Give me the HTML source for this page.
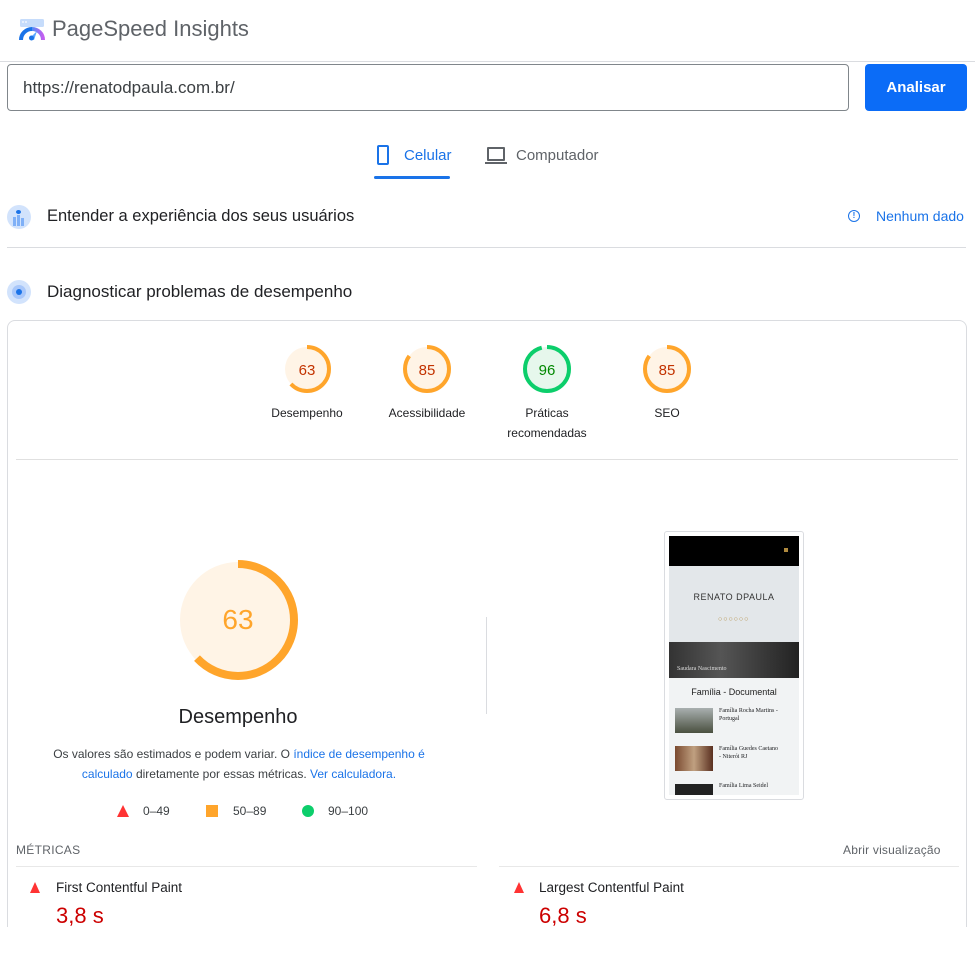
<!DOCTYPE html>
<html style="height:955px;overflow:hidden"><head><meta charset="utf-8"><style>
*{margin:0;padding:0;box-sizing:border-box}
body{width:975px;height:955px;background:#fff;font-family:"Liberation Sans",Arial,sans-serif;position:relative;overflow:hidden;color:#202124}
.a{position:absolute}
.t{white-space:nowrap}
</style></head><body>
<svg class="a" style="left:18px;top:18px" width="28" height="24" viewBox="0 0 28 24">
<rect x="2" y="1" width="24" height="8" rx="1.5" fill="#c6dcfb"/>
<circle cx="5" cy="4" r=".9" fill="#fff"/><circle cx="8" cy="4" r=".9" fill="#fff"/>
<path d="M3 22 A11 11 0 0 1 14 11" stroke="#1a73e8" stroke-width="4" fill="none"/>
<path d="M14 11 A11 11 0 0 1 25 22" stroke="url(#g)" stroke-width="4" fill="none"/>
<defs><linearGradient id="g"><stop offset="0" stop-color="#4e8df5"/><stop offset="1" stop-color="#c45ef0"/></linearGradient></defs>
<path d="M12 20 L19 13 L16 22 Z" fill="#5aa6ff"/>
<circle cx="13.5" cy="20" r="2.5" fill="#1a73e8"/>
</svg>
<div class="a t" style="left:52px;top:16px;font-size:22px;color:#5f6368">PageSpeed Insights</div>
<div class="a" style="left:0;top:61px;width:975px;height:1px;background:#dadce0"></div>
<div class="a" style="left:7px;top:64px;width:842px;height:47px;border:1px solid #80868b;border-radius:4px"></div>
<div class="a t" style="left:23px;top:78px;font-size:17px;color:#3c4043">https://renatodpaula.com.br/</div>
<div class="a" style="left:865px;top:64px;width:102px;height:47px;background:#0b6cf7;border-radius:4px;color:#fff;font-weight:bold;font-size:15px;text-align:center;line-height:48px">Analisar</div>
<div class="a" style="left:377px;top:145px;width:12px;height:20px;border:2px solid #1a73e8;border-radius:2px"></div>
<div class="a t" style="left:404px;top:147px;font-size:15px;color:#1a73e8">Celular</div>
<div class="a" style="left:374px;top:176px;width:76px;height:3px;background:#1a73e8;border-radius:2px"></div>
<div class="a" style="left:487px;top:147px;width:18px;height:14px;border:2px solid #5f6368;border-radius:1px"></div>
<div class="a" style="left:485px;top:162px;width:22px;height:2px;background:#5f6368"></div>
<div class="a t" style="left:516px;top:147px;font-size:15px;color:#5f6368">Computador</div>
<div class="a" style="left:7px;top:205px;width:24px;height:24px;border-radius:50%;background:#d2e3fc"></div>
<div class="a" style="left:13px;top:217px;width:3px;height:9px;background:#7fb0f7"></div>
<div class="a" style="left:17px;top:215px;width:3px;height:11px;background:#7fb0f7"></div>
<div class="a" style="left:21px;top:218px;width:3px;height:8px;background:#7fb0f7"></div>
<div class="a" style="left:16px;top:210px;width:5px;height:4px;border-radius:50%;background:#1a73e8"></div>
<div class="a t" style="left:47px;top:207px;font-size:16.5px">Entender a experiência dos seus usuários</div>
<div class="a" style="left:848px;top:210px;width:12px;height:12px;border:1.5px solid #1a73e8;border-radius:50%;font-size:8px;color:#1a73e8;text-align:center;line-height:9px;font-weight:bold">!</div>
<div class="a t" style="left:876px;top:208px;font-size:14px;color:#1a73e8">Nenhum dado</div>
<div class="a" style="left:7px;top:247px;width:959px;height:1px;background:#dadce0"></div>
<div class="a" style="left:7px;top:280px;width:24px;height:24px;border-radius:50%;background:#d2e3fc"></div>
<div class="a" style="left:12px;top:285px;width:14px;height:14px;border-radius:50%;background:#a8c7fa"></div>
<div class="a" style="left:16px;top:289px;width:6px;height:6px;border-radius:50%;background:#1a73e8"></div>
<div class="a t" style="left:47px;top:282px;font-size:17px">Diagnosticar problemas de desempenho</div>
<div class="a" style="left:7px;top:320px;width:960px;height:630px;border:1px solid #dadce0;border-radius:8px"></div>
<svg class="a" style="left:0;top:0" width="975" height="955">
<g fill="#fff4e6"><circle cx="307" cy="369" r="22"/><circle cx="427" cy="369" r="22"/><circle cx="667" cy="369" r="22"/><circle cx="238" cy="620" r="58"/></g>
<circle cx="547" cy="369" r="22" fill="#e6f7ec"/>
<g fill="none" stroke-width="4">
<circle cx="307" cy="369" r="22" stroke="#ffa52b" stroke-dasharray="87 200" transform="rotate(-90 307 369)"/>
<circle cx="427" cy="369" r="22" stroke="#ffa52b" stroke-dasharray="117.5 200" transform="rotate(-90 427 369)"/>
<circle cx="547" cy="369" r="22" stroke="#0cce6b" stroke-dasharray="132.7 200" transform="rotate(-90 547 369)"/>
<circle cx="667" cy="369" r="22" stroke="#ffa52b" stroke-dasharray="117.5 200" transform="rotate(-90 667 369)"/>
<circle cx="238" cy="620" r="56" stroke="#ffa52b" stroke-width="8" stroke-dasharray="221.7 400" transform="rotate(-90 238 620)"/>
</g>
<g font-family="Liberation Sans,sans-serif" text-anchor="middle" font-size="15">
<text x="307" y="375" fill="#c33300">63</text><text x="427" y="375" fill="#c33300">85</text>
<text x="547" y="375" fill="#008800">96</text><text x="667" y="375" fill="#c33300">85</text>
<text x="238" y="629" fill="#ffa52b" font-size="28">63</text>
</g>
</svg>
<div class="a" style="left:247px;top:406px;width:120px;text-align:center;font-size:12px">Desempenho</div>
<div class="a" style="left:367px;top:406px;width:120px;text-align:center;font-size:12px">Acessibilidade</div>
<div class="a" style="left:487px;top:403px;width:120px;text-align:center;font-size:12px;line-height:20px">Práticas<br>recomendadas</div>
<div class="a" style="left:607px;top:406px;width:120px;text-align:center;font-size:12px">SEO</div>
<div class="a" style="left:16px;top:459px;width:942px;height:1px;background:#e0e0e0"></div>
<div class="a" style="left:78px;top:706px;width:320px;text-align:center;font-size:20px">Desempenho</div>
<div class="a" style="left:40px;top:744px;width:398px;text-align:center;font-size:12px;line-height:20px;color:#3c4043">Os valores são estimados e podem variar. O <span style="color:#1a73e8">índice de desempenho é calculado</span> diretamente por essas métricas. <span style="color:#1a73e8">Ver calculadora.</span></div>
<div class="a" style="left:117px;top:805px;width:0;height:0;border-left:6px solid transparent;border-right:6px solid transparent;border-bottom:12px solid #ff3333"></div>
<div class="a t" style="left:143px;top:804px;font-size:12px;color:#3c4043">0–49</div>
<div class="a" style="left:206px;top:805px;width:12px;height:12px;background:#ffa52b"></div>
<div class="a t" style="left:233px;top:804px;font-size:12px;color:#3c4043">50–89</div>
<div class="a" style="left:302px;top:805px;width:12px;height:12px;border-radius:50%;background:#0cce6b"></div>
<div class="a t" style="left:328px;top:804px;font-size:12px;color:#3c4043">90–100</div>
<div class="a" style="left:486px;top:617px;width:1px;height:97px;background:#dadce0"></div>
<div class="a" style="left:664px;top:531px;width:140px;height:269px;border:1px solid #dadce0;border-radius:3px;background:#fff"></div>
<div class="a" style="left:669px;top:536px;width:130px;height:259px;background:#f1f3f4;overflow:hidden">
 <div style="height:30px;background:#000;position:relative"><div style="position:absolute;right:11px;top:12px;width:4px;height:4px;background:#b08a3e"></div></div>
 <div style="height:76px;background:#e3e7ea;position:relative">
  <div style="position:absolute;left:0;top:26px;width:130px;text-align:center;font-size:9px;color:#333;letter-spacing:.5px">RENATO DPAULA</div>
  <div style="position:absolute;left:49px;top:50px;font-size:7px;color:#b08a3e;letter-spacing:1px">○○○○○○</div>
 </div>
 <div style="height:36px;background:linear-gradient(90deg,#333,#555 40%,#222);color:#ddd;font-size:6px;padding:24px 0 0 8px;font-family:'Liberation Serif',serif">Saudara Nascimento</div>
 <div style="text-align:center;font-size:9px;color:#222;padding-top:9px">Família - Documental</div>
 <div style="position:relative;height:120px">
  <div style="position:absolute;left:6px;top:11px;width:38px;height:25px;background:linear-gradient(#a9b0b0,#4a5040)"></div>
  <div style="position:absolute;left:50px;top:10px;font-size:6px;line-height:8px;font-family:'Liberation Serif',serif">Família Rocha Martins -<br>Portugal</div>
  <div style="position:absolute;left:6px;top:49px;width:38px;height:25px;background:linear-gradient(90deg,#7a4a30,#c0a080,#5a3020)"></div>
  <div style="position:absolute;left:50px;top:48px;font-size:6px;line-height:8px;font-family:'Liberation Serif',serif">Família Guedes Caetano<br>- Niterói RJ</div>
  <div style="position:absolute;left:6px;top:87px;width:38px;height:20px;background:#222"></div>
  <div style="position:absolute;left:50px;top:86px;font-size:6px;font-family:'Liberation Serif',serif">Família Lima Seidel</div>
 </div>
</div>
<div class="a t" style="left:16px;top:843px;font-size:12px;color:#5f6368;letter-spacing:.3px">MÉTRICAS</div>
<div class="a t" style="left:843px;top:843px;font-size:12px;color:#5f6368;letter-spacing:.2px">Abrir visualização</div>
<div class="a" style="left:16px;top:866px;width:461px;height:1px;background:#e8e8e8"></div>
<div class="a" style="left:499px;top:866px;width:460px;height:1px;background:#e8e8e8"></div>
<div class="a" style="left:30px;top:882px;width:0;height:0;border-left:5.5px solid transparent;border-right:5.5px solid transparent;border-bottom:11px solid #ff3333"></div>
<div class="a t" style="left:56px;top:880px;font-size:13.5px">First Contentful Paint</div>
<div class="a t" style="left:56px;top:903px;font-size:22px;color:#c00">3,8 s</div>
<div class="a" style="left:514px;top:882px;width:0;height:0;border-left:5.5px solid transparent;border-right:5.5px solid transparent;border-bottom:11px solid #ff3333"></div>
<div class="a t" style="left:539px;top:880px;font-size:13.5px">Largest Contentful Paint</div>
<div class="a t" style="left:539px;top:903px;font-size:22px;color:#c00">6,8 s</div>
<div class="a" style="left:0;top:927px;width:975px;height:28px;background:#fff"></div>
</body></html>
